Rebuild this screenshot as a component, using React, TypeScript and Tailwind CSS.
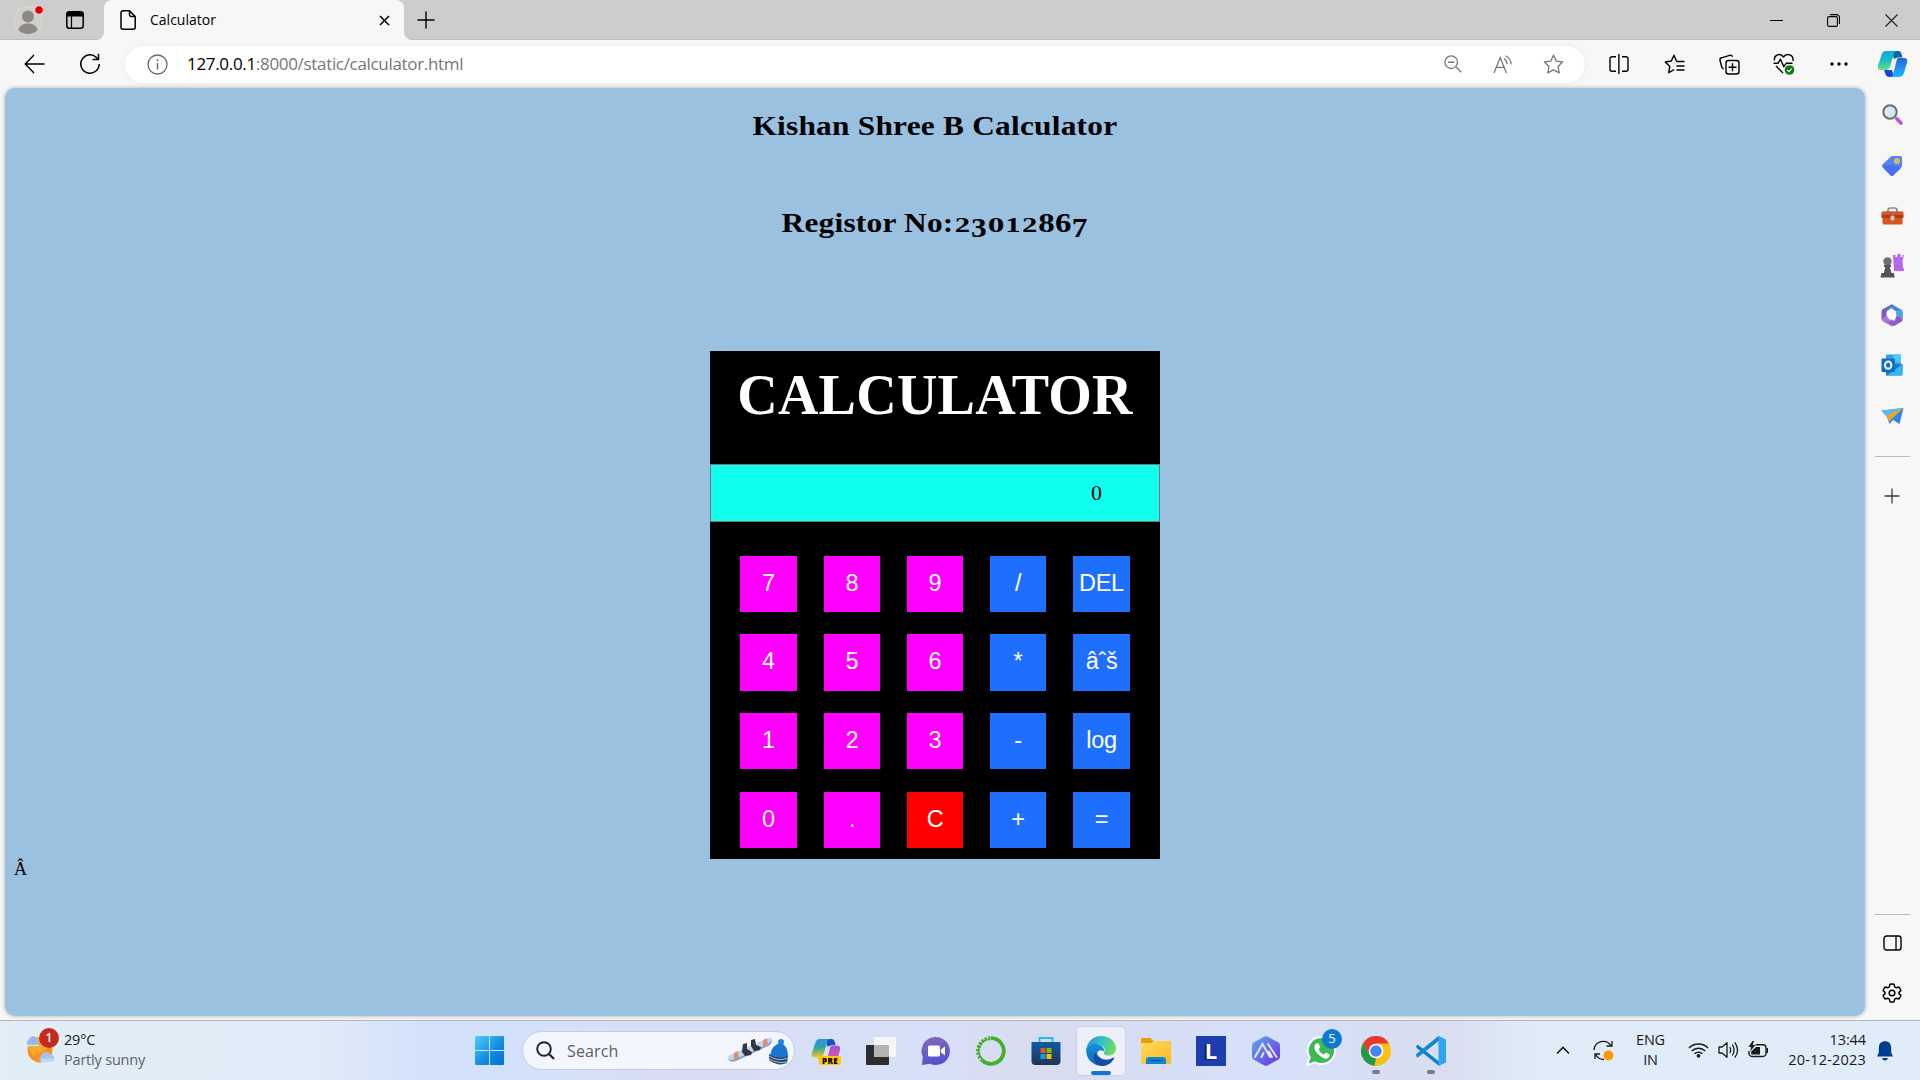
import React from "react";

type SvgProps = { w: number; h: number; vb?: string; className?: string; children: React.ReactNode };

function Svg({ w, h, vb, className = "", children }: SvgProps) {
  return (
    <svg width={w} height={h} viewBox={vb ?? `0 0 ${w} ${h}`} fill="none" className={`shrink-0 ${className}`}>
      {children}
    </svg>
  );
}

const ink = "#1b1b1b";

function TitleBar() {
  return (
    <div className="flex h-10 items-center bg-[#cdcdcd] shadow-[inset_0_-1px_0_#bdbdbd]">
      <Svg w={30} h={30} className="ml-[13px]">
        <circle cx="15" cy="15.5" r="13.7" fill="#d0cfcb" stroke="#dedcd6" />
        <circle cx="15" cy="11.5" r="6" fill="#8d8a86" />
        <path d="M5.2 25c1.500-4.600 5.400-6.400 9.800-6.400s8.300 1.800 9.800 6.400a13.700 13.700 0 0 1-19.600 0z" fill="#8d8a86" />
        <circle cx="26" cy="5" r="4.300" fill="#e60000" stroke="#e8e8e8" />
      </Svg>
      <Svg w={18} h={18} className="ml-[23px]">
        <rect x="0.800" y="0.800" width="16.400" height="16.400" rx="2.500" stroke="#000" strokeWidth="1.500" />
        <path d="M1 3a2 2 0 0 1 2-2h12a2 2 0 0 1 2 2v2.500H1z" fill="#000" />
        <path d="M5.500 5v12" stroke="#000" strokeWidth="1.200" />
      </Svg>
      <div className="flex h-10 w-2 items-end self-end ml-[12px]">
        <Svg w={8} h={8}><path d="M0 8a8 8 0 0 0 8-8v8z" fill="#f7f7f7" /></Svg>
      </div>
      <div className="flex h-10 w-[300px] items-center rounded-t-lg bg-[#f7f7f7]">
        <Svg w={16} h={20} className="ml-[16px]">
          <path d="M3 .8h6.500l5.700 5.700v10.700a2 2 0 0 1-2 2H3a2 2 0 0 1-2-2V2.800a2 2 0 0 1 2-2zM9.500 1v3.500a2 2 0 0 0 2 2H15" stroke="#000" strokeWidth="1.500" />
        </Svg>
        <span className="ml-[14px] pb-px text-[14px] tracking-[0px] text-black">Calculator</span>
        <Svg w={11} h={11} className="ml-auto mr-[14px]"><path d="M1 1l9 9M10 1l-9 9" stroke="#000" strokeWidth="1.500" /></Svg>
      </div>
      <div className="flex h-10 w-2 items-end">
        <Svg w={8} h={8}><path d="M8 8a8 8 0 0 1-8-8v8z" fill="#f7f7f7" /></Svg>
      </div>
      <Svg w={18} h={18} className="ml-[4.500px]"><path d="M9 .5v17M.5 9h17" stroke="#000" strokeWidth="1.400" /></Svg>
      <div className="ml-auto flex items-center">
        <Svg w={13} h={13} className="mr-[44px]"><path d="M0 6.500h13" stroke="#000" /></Svg>
        <Svg w={13} h={13} className="mr-[45px]">
          <rect x=".6" y="2.600" width="9.800" height="9.800" rx="1.500" stroke="#000" strokeWidth="1.100" />
          <path d="M3 .6h6.500a3 3 0 0 1 3 3V10" stroke="#000" strokeWidth="1.100" />
        </Svg>
        <Svg w={13} h={13} className="mr-[22px]"><path d="M.5.5l12 12M12.500.5l-12 12" stroke="#222" strokeWidth="1.200" /></Svg>
      </div>
    </div>
  );
}

function CopilotMark({ pre = false }: { pre?: boolean }) {
  return (
    <Svg w={pre ? 30 : 31} h={pre ? 29 : 28} vb={pre ? "0 0 31 30" : "0 0 31 28"}>
      <defs>
        <linearGradient id={pre ? "cpa" : "cna"} x1="0" y1="0" x2=".1" y2="1">
          <stop offset="0" stopColor={pre ? "#2d8fe6" : "#12a8e0"} />
          <stop offset=".5" stopColor={pre ? "#2aa6a8" : "#1bb8c8"} />
          <stop offset="1" stopColor={pre ? "#f2c51c" : "#5fe08a"} />
        </linearGradient>
        <linearGradient id={pre ? "cpb" : "cnb"} x1="0" y1="0" x2="0" y2="1">
          <stop offset="0" stopColor={pre ? "#a84be0" : "#2c64dc"} />
          <stop offset="1" stopColor={pre ? "#f5607a" : "#18b8ff"} />
        </linearGradient>
      </defs>
      <path d="M14 1h7c2 0 3 1 3.500 3l1 3.500h-5L17 9z" fill={pre ? "#1b4fc4" : "#0d6a9c"} />
      <path d="M7 20h8l2 7h-4c-3 0-4-1-4.600-3z" fill={pre ? "#f2a51c" : "#1746cf"} />
      <path d="M9 1h11c-1.800 0-2.600 1-3.200 3l-3.700 12.500c-.8 2.500-2 3.500-4.200 3.500H4c-3 0-3.600-2-3-4.500L4.500 5C5.300 2.400 6.500 1 9 1z" fill={`url(#${pre ? "cpa" : "cna"})`} />
      <path d="M21.500 8H27c3 0 3.700 2 3 4.500L27 23c-.8 2.700-2.500 4-5 4h-9c1.700 0 2.700-1 3.200-3l3.200-12.500C20 9 20 8 21.500 8z" fill={`url(#${pre ? "cpb" : "cnb"})`} />
    </Svg>
  );
}

function Slot({ w = "w-[55px]", children }: { w?: string; children: React.ReactNode }) {
  return <div className={`relative flex h-full shrink-0 items-center justify-center ${w}`}>{children}</div>;
}

function Toolbar() {
  return (
    <div className="flex h-12 items-center bg-[#f7f7f7]">
      <Svg w={21} h={20} className="ml-[24px]"><path d="M20.500 10H1.500M10 1L1.200 10l8.800 9" stroke="#000" strokeWidth="1.400" /></Svg>
      <Svg w={22} h={22} className="ml-[34px]">
        <path d="M20.200 11a9.200 9.200 0 1 1-3-6.800l2 2" stroke="#000" strokeWidth="1.500" />
        <path d="M19.500.8v5.700h-6" stroke="#000" strokeWidth="1.500" />
      </Svg>
      <div className="ml-[24px] flex h-[37px] w-[1460px] items-center rounded-full bg-white shadow-[0_0_4px_rgba(0,0,0,0.07)]">
        <Svg w={21} h={21} className="ml-[22px]">
          <circle cx="10.500" cy="10.500" r="9.500" stroke="#6b6b6b" strokeWidth="1.300" />
          <path d="M10.500 9v6.500" stroke="#6b6b6b" strokeWidth="1.400" />
          <circle cx="10.500" cy="6.300" r="1" fill="#6b6b6b" />
        </Svg>
        <span className="ml-[19px] whitespace-nowrap text-[17px] tracking-[-0.320px] text-[#767676]">
          <span className="text-black">127.0.0.1</span>:8000/static/calculator.html
        </span>
        <div className="ml-auto mr-[7px] flex h-full">
          <Slot w="w-[50px]">
            <Svg w={18} h={18}><circle cx="7.200" cy="7.200" r="6.300" stroke="#777" strokeWidth="1.300" /><path d="M12 12l5.300 5.300M4.200 7.200h6" stroke="#777" strokeWidth="1.400" /></Svg>
          </Slot>
          <Slot w="w-[50px]">
            <Svg w={20} h={19}>
              <path d="M1 18L7.200 2.500 13.400 18M3.300 12.300h7.800" stroke="#777" strokeWidth="1.300" />
              <path d="M11 3.500c2 1.300 2.900 3 3 5.500M12.500.8c3.500 1.800 5.500 4.700 5.700 8.700" stroke="#777" strokeWidth="1.200" />
            </Svg>
          </Slot>
          <Slot w="w-[50px]">
            <Svg w={21} h={20}><path d="M10.500 1.200l2.800 5.900 6.300.9-4.600 4.500 1.200 6.400-5.700-3-5.700 3L6 12.500 1.400 8l6.300-.9z" stroke="#777" strokeWidth="1.300" strokeLinejoin="round" /></Svg>
          </Slot>
        </div>
      </div>
      <div className="ml-[6.500px] flex h-full">
        <Slot>
          <Svg w={20} h={20}><path d="M7 2.700H3a2 2 0 0 0-2 2v10.600a2 2 0 0 0 2 2h4M13 2.700h4a2 2 0 0 1 2 2v10.600a2 2 0 0 1-2 2h-4" stroke="#000" strokeWidth="1.400" /><path d="M9.900 0v20" stroke="#000" strokeWidth="1.400" /></Svg>
        </Slot>
        <Slot>
          <Svg w={21} h={20}><path d="M12.500 7.300L10 1.300 7.300 7l-6 1 4.500 4.400-1 6.300 5.500-3.200M12.500 7.500h8M12.500 12h8M12.500 16h8" stroke="#000" strokeWidth="1.400" strokeLinejoin="round" /></Svg>
        </Slot>
        <Slot>
          <Svg w={21} h={21}>
            <path d="M4.800 14.800c-1 0-1.800-.6-2-1.600L1 6.300c-.3-1.200.3-2.200 1.500-2.500L10.700 1.300c1.300-.4 2.300.2 2.600 1.500" stroke="#000" strokeWidth="1.400" />
            <rect x="7" y="6.500" width="13" height="13.500" rx="2.500" stroke="#000" strokeWidth="1.400" />
            <path d="M13.500 9.300v8M9.500 13.300h8" stroke="#000" strokeWidth="1.400" />
          </Svg>
        </Slot>
        <Slot>
          <Svg w={22} h={22}>
            <path d="M1.500 7.500C.5 1.500 7.500-.5 10.500 4 13.500-.5 21 1.500 20 8M3 13l7 7M.5 10.200h4.700l2.300-4 3.300 7.500 2.600-3.500h6.100" stroke="#000" strokeWidth="1.400" strokeLinejoin="round" />
            <circle cx="16.500" cy="17" r="4.800" fill="#107c10" /><path d="M14.300 17l1.600 1.600 2.800-3" stroke="#fff" strokeWidth="1.100" />
          </Svg>
        </Slot>
        <Slot><Svg w={18} h={4}><circle cx="2" cy="2" r="1.700" fill="#000" /><circle cx="9" cy="2" r="1.700" fill="#000" /><circle cx="16" cy="2" r="1.700" fill="#000" /></Svg></Slot>
        <Slot w="w-[52px]"><CopilotMark /></Slot>
      </div>
    </div>
  );
}

const digit = "bg-[#ff00ff] h-[56px]";
const digitTall = "bg-[#ff00ff] h-[57px]";
const op = "bg-[#1f6fff] h-[56px]";
const opTall = "bg-[#1f6fff] h-[57px]";

const keys: [string, string][] = [
  ["7", digit], ["8", digit], ["9", digit], ["/", op], ["DEL", op],
  ["4", digitTall], ["5", digitTall], ["6", digitTall], ["*", opTall], ["âˆš", opTall],
  ["1", digit], ["2", digit], ["3", digit], ["-", op], ["log", op],
  ["0", digit], [".", digit], ["C", "bg-[#ff0000] h-[56px]"], ["+", op], ["=", op],
];

/* Old-style figures: 0-2 sit at x-height, 3 and 7 descend, 6 and 8 ascend. */
const figureStyle: Record<string, string> = {
  "0": "text-[22px] scale-x-[1.350]",
  "1": "text-[22px] scale-x-[1.250]",
  "2": "text-[22px] scale-x-[1.250]",
  "3": "text-[28px] align-[-5px]",
  "7": "text-[28px] align-[-5px]",
  "6": "text-[28px] scale-x-[1.050]",
  "8": "text-[28px] scale-x-[1.050]",
};

function Page() {
  return (
    <div className="ml-[5px] flex h-[928px] w-[1860px] flex-col items-center rounded-[10px] bg-[#9bc1e1] shadow-[0_0_4px_rgba(0,0,0,0.3)]">
      <h2 className="mt-[20px] h-9 scale-x-[1.120] whitespace-nowrap font-['Liberation_Serif'] text-[28px] font-bold leading-9 tracking-[0.200px] text-black">
        Kishan Shree B Calculator
      </h2>
      <h2 className="mt-[61px] flex h-9 scale-x-[1.120] items-baseline whitespace-nowrap font-['Liberation_Serif'] text-[28px] font-bold leading-9 text-black">
        <span className="tracking-[0.200px]">Registor No:</span>
        <span>
          {"23012867".split("").map((d, i) => (
            <span key={i} className={`inline-block w-[15px] text-center leading-none ${figureStyle[d]}`}>{d}</span>
          ))}
        </span>
      </h2>
      <div className="mt-[110px] flex h-[508px] w-[450px] flex-col items-center bg-black">
        <h1 className="mt-[12px] h-[64px] whitespace-nowrap font-['Liberation_Serif'] text-[56px] font-bold leading-[64px] tracking-[0.250px] text-white">CALCULATOR</h1>
        <div className="mt-[37px] flex h-[58px] w-[450px] items-center justify-end border border-[#767676] bg-[#11ffee] pb-[2px] pr-[57px] font-['Liberation_Serif'] text-[22px] text-black">0</div>
        <div className="mt-[34px] grid grid-cols-[57px_56px_56px_56px_57px] grid-rows-[56px_57px_57px_56px] items-start gap-x-[27px] gap-y-[22px]">
          {keys.map(([label, style]) => (
            <button key={label} className={`flex items-center justify-center pb-px font-['Liberation_Sans'] text-[23.500px] leading-none tracking-[-0.300px] text-white ${style}`}>
              {label}
            </button>
          ))}
        </div>
      </div>
      <p className="mt-[-1px] self-start pl-[9px] font-['Liberation_Serif'] text-[18px] leading-[22px] text-black">Â</p>
    </div>
  );
}

function Sidebar() {
  return (
    <div className="flex h-[932px] w-[55px] flex-col items-center pr-[1px]">
      <Svg w={21} h={21} className="mt-[16px]">
        <circle cx="8" cy="8" r="6.700" fill="#cfe8fa" stroke="#6b6b6b" strokeWidth="2" />
        <path d="M12.800 12.800l1.500 1.500" stroke="#888" strokeWidth="2" />
        <path d="M15 15l4 4" stroke="#b94df0" strokeWidth="3.600" strokeLinecap="round" />
      </Svg>
      <Svg w={22} h={22} className="mt-[30px]">
        <path d="M1.500 9.500L9.800 1.800Q10.500 1 11.500 1H19q2 0 2 2v7.500q0 1-.7 1.800l-7.800 8q-1.500 1.300-3 0l-8-8q-1.300-1.400 0-2.800z" fill="#5583f6" />
        <path d="M1 11l10-1 9 3-8 7.500q-1 1-2.500 0z" fill="#4a6ef0" />
        <circle cx="16" cy="6" r="2.300" fill="#9db8f0" stroke="#f4c21a" strokeWidth="1.500" />
      </Svg>
      <Svg w={23} h={18} className="mt-[30px]">
        <path d="M7 6V3.500Q7 1 9.500 1h4Q16 1 16 3.500V6" stroke="#8b8b8b" strokeWidth="1.700" />
        <rect x="1.500" y="8" width="20" height="9.500" rx="1.500" fill="#d9541e" />
        <path d="M2 4.500h19q1.500 0 1.500 1.500v5H.5V6Q.5 4.500 2 4.500z" fill="#b83a12" />
        <path d="M1 5.500h21v2H1z" fill="#e2632a" /><rect x="9.500" y="8.500" width="4" height="5" rx="1.500" fill="#c9c9c9" />
      </Svg>
      <Svg w={24} h={24} className="mt-[29px]">
        <path d="M13 1h2.500v2h2V0h3v3h2V1H24l-1.500 6 .7 7.500h1v2.500H14z" fill="#b866f2" />
        <circle cx="7.500" cy="7.500" r="4.200" fill="#707070" />
        <path d="M4 11h7v2H9.800l1.700 6h2.300l1 4.500H.5l1-4.500h2.300L5.300 13H4z" fill="#555" />
      </Svg>
      <Svg w={22} h={23} className="mt-[26px]">
        <path d="M11 .5l9 5q1.500 1 1.500 2.500v3l-6-3.500L10 4 5 8V5q0-1 1-1.500z" fill="#3c86df" />
        <path d="M10 .8Q11 .3 12 .8L5.500 5v9.500l-5 1V8Q.5 6 2 5z" fill="#7a5cc0" />
        <path d="M.6 14.500L6 12l9.500 6.500L12 22q-1 .6-2 .1l-8-4.600Q.5 16.500.6 14.500z" fill="#a678d8" />
        <path d="M21.500 8v8q0 1-1 1.700L13 22l-7-4 8-1.500 1.500-8.500z" fill="#8a5cc4" /><path d="M20 5l1.500 3v7L15 11V8z" fill="#49a6f0" />
        <path d="M8.500 8h5l2.300 3.700-2.500 3.800h-5L6 11.700z" fill="#fff" />
      </Svg>
      <Svg w={22} h={22} className="mt-[27px]">
        <rect x="5" y=".5" width="15" height="16" rx="1" fill="#2aa4ea" /><path d="M12.500 .5H20v8h-7.500z" fill="#52c6f6" />
        <path d="M5 11l16.500-1V20q0 1.500-1.500 1.500H5z" fill="#1478d0" /><path d="M6 21.500L21.500 10V20q0 1.500-1.500 1.500z" fill="#38b6f2" />
        <rect x=".5" y="4.500" width="13.500" height="13.500" rx="1.200" fill="#0f6cc8" />
        <ellipse cx="7.200" cy="11.200" rx="3.200" ry="3.600" stroke="#fff" strokeWidth="2" />
      </Svg>
      <Svg w={23} h={18} className="mt-[30.500px]">
        <path d="M.5 3.500L22.500 1l-4 16-6.500-4-3.500 4-2.500-7z" fill="#3485ea" />
        <path d="M.5 3.500L22.500 1 6 10z" fill="#54bdf2" /><path d="M5 8.500L22.500 1 8 14.500z" fill="#f2a31f" />
      </Svg>
      <div className="mt-[31.500px] h-px w-[35px] bg-[#b9b9b9]" />
      <Svg w={16} h={16} className="mt-[31px]"><path d="M8 .5v15M.5 8h15" stroke="#3a3a3a" strokeWidth="1.300" /></Svg>
      <div className="mt-auto h-px w-[35px] bg-[#b9b9b9]" />
      <Svg w={19} h={16} className="mt-[20px]"><rect x="1" y="1" width="17" height="14" rx="2.500" stroke="#000" strokeWidth="1.400" /><path d="M13 1v14" stroke="#000" strokeWidth="1.300" /></Svg>
      <Svg w={22} h={22} vb="0 0 24 24" className="mb-[16.500px] mt-[31px]">
        <path d="M9.700 2.500q2.300-.6 4.600 0l.6 2.800 1.800 1 2.700-.9q1.600 1.700 2.300 4l-2.100 1.900v1.400l2.100 1.900q-.7 2.300-2.300 4l-2.700-.9-1.800 1-.6 2.800q-2.300.6-4.600 0l-.6-2.800-1.800-1-2.700.9q-1.600-1.700-2.300-4l2.100-1.900v-1.400L2.300 9.400q.7-2.300 2.300-4l2.700.9 1.800-1z" stroke="#000" strokeWidth="1.600" strokeLinejoin="round" />
        <circle cx="12" cy="12" r="3.100" stroke="#000" strokeWidth="1.600" />
      </Svg>
    </div>
  );
}

function TaskbarApps() {
  return (
    <div className="ml-[3.500px] flex h-full">
      <Slot>
        <div className="flex flex-col items-center pt-0.5"><CopilotMark pre />
          <span className="ml-2 mt-[-11px] flex h-[9px] items-center rounded-[2px] bg-[#ffc800] px-[3px] font-['Open_Sans'] text-[8px] font-extrabold leading-none tracking-[0.400px] text-black">PRE</span>
        </div>
      </Slot>
      <Slot>
        <Svg w={30} h={28}><rect x="0" y="8" width="23" height="20" rx="1" fill="#2d2d2d" /><rect x="8" y="0" width="22" height="20" rx="1" fill="#f6f6f6" /><path d="M8 8h15v12H8z" fill="#b3b3b3" /></Svg>
      </Slot>
      <Slot>
        <Svg w={30} h={28}>
          <defs><linearGradient id="chat" x1="0" y1="0" x2=".3" y2="1"><stop stopColor="#8a6bb8" /><stop offset="1" stopColor="#5254cf" /></linearGradient></defs>
          <path d="M15 0a14 14 0 1 1-6 26.700L1 28l.8-8A14 14 0 0 1 15 0z" fill="url(#chat)" /><rect x="7" y="8.500" width="12" height="11" rx="1.500" fill="#fff" /><path d="M20 12.500l4-3v9l-4-3z" fill="#fff" />
        </Svg>
      </Slot>
      <Slot>
        <Svg w={30} h={30}><path d="M15 2.200a12.800 12.800 0 1 1-8.500 22.400" stroke="#43b02a" strokeWidth="3.800" /><path d="M6.500 24.600A12.800 12.800 0 0 1 15 2.200" stroke="#43b02a" strokeWidth="4" strokeDasharray="2.200 1.300" /><path d="M7.500 24A11.500 11.500 0 0 1 14 3" stroke="#43b02a" strokeWidth="1.200" /></Svg>
      </Slot>
      <Slot>
        <Svg w={30} h={30}>
          <defs><linearGradient id="store" x1="0" y1="0" x2="0" y2="1"><stop stopColor="#0d5ca8" /><stop offset="1" stopColor="#243350" /></linearGradient></defs>
          <path d="M8.500 6V2h13v4" stroke="#2bb7f4" strokeWidth="1.800" /><path d="M.5 6h29v19a4 4 0 0 1-4 4h-21a4 4 0 0 1-4-4z" fill="url(#store)" />
          <path d="M9.500 12h5v5h-5z" fill="#f25022" /><path d="M15.500 12h5v5h-5z" fill="#7fba00" /><path d="M9.500 18h5v5h-5z" fill="#00a4ef" /><path d="M15.500 18h5v5h-5z" fill="#ffb900" />
        </Svg>
      </Slot>
      <Slot>
        <div className="flex h-12 w-12 flex-col items-center rounded-[4px] bg-[#edf0f9] pt-[9px] shadow-[0_0_1px_1px_rgba(0,0,0,0.06)]">
          <Svg w={30} h={30}>
            <defs>
              <linearGradient id="eg1" x1="0" y1=".2" x2="1" y2=".5"><stop stopColor="#2492d8" /><stop offset=".5" stopColor="#38bfc8" /><stop offset="1" stopColor="#6ce05a" /></linearGradient>
              <linearGradient id="eg2" x1="0" y1="0" x2="0" y2="1"><stop stopColor="#178fd8" /><stop offset="1" stopColor="#1067c0" /></linearGradient>
            </defs>
            <path d="M.5 12C2.500 4 8.500 0 15 0c9 0 15 6 15 12.500 0 4.500-3.500 7-7.500 7-4 0-5.500-1.800-4.500-3 1.800-2.500.5-6.500-5-8C8 7.500 3 9 .5 12z" fill="url(#eg1)" />
            <path d="M.3 12.500C3 8.500 8 6.500 13 8.500c4.500 1.800 5.500 5 4.800 7-3-3-7.300-.5-7.300 4 0 5.500 5 10 10 9.500C10 32-1 25 .3 12.500z" fill="url(#eg2)" />
            <path d="M11 16c-1.500 5 2.500 10.500 9 11 3.500 0 6-1.500 7-3-2.500 4-7 6-11.500 6C8.500 29 5.500 22 9.500 17z" fill="#12509c" /><path d="M11.500 18c2 5.500 9 7.500 15.700 3.700.8-.4 1.300.3.800 1-2.500 4-6.500 6-10.500 5.500-5-.8-7.500-6-6-10.200z" fill="#14509e" />
          </Svg>
          <div className="mt-[5px] h-1 w-5 rounded-full bg-[#0a78d4]" />
        </div>
      </Slot>
      <Slot>
        <Svg w={30} h={28}><defs><linearGradient id="folder" x1="0" y1="0" x2="1" y2="1"><stop stopColor="#ffdc62" /><stop offset="1" stopColor="#f9b91c" /></linearGradient></defs>
          <path d="M0 2q0-1 1-1h8.500l3 3H30v8H0z" fill="#e3a008" /><path d="M0 6h10l3-2h17v22q0 1-1 1H1q-1 0-1-1z" fill="url(#folder)" /><path d="M5 27v-4q0-3 3-3h14q3 0 3 3v4z" fill="#1383d8" /><path d="M9 23.500h12" stroke="#0a549c" strokeWidth="1.200" /></Svg>
      </Slot>
      <Slot>
        <div className="flex h-[30px] w-[30px] items-center justify-center bg-[#1e3db0] pb-[2px] font-['Open_Sans'] text-[22px] font-bold leading-none text-white [text-shadow:-2px_1px_0_#12246e]">L</div>
      </Slot>
      <Slot>
        <Svg w={28} h={30}><defs><linearGradient id="hex" x1="0" y1="0" x2="1" y2="1"><stop stopColor="#5cabea" /><stop offset="1" stopColor="#702de8" /></linearGradient></defs>
          <path d="M12 .8q2-1 4 0l10 5.500q2 1.200 2 3.200v11q0 2-2 3.200l-10 5.500q-2 1-4 0L2 23.700Q0 22.500 0 20.500v-11Q0 7.500 2 6.300z" fill="url(#hex)" />
          <path d="M3 21l7.500-13L18 21M9.500 21l2-4M17 15.500l3 5.500M16 8l8.500 13" stroke="#e7e7ff" strokeWidth="1.900" strokeLinecap="round" /></Svg>
      </Slot>
      <Slot>
        <Svg w={30} h={30}><path d="M15.500 1a13.500 13.500 0 1 1-6.300 25.400L1 29l2.700-7.500A13.500 13.500 0 0 1 15.500 1z" fill="#3db954" stroke="#fff" strokeWidth="2" /><path d="M10 7.500l2.500-.2 1.800 4-1.700 2.200q1.700 3.500 5.200 5l2.200-2 3.700 2q0 3-2.800 4-3 .8-8-3.500-5-4.500-4.500-8 .3-2.200 1.600-3.500z" fill="#fff" /></Svg>
        <span className="absolute left-[28.500px] top-[8px] flex h-5 w-5 items-center justify-center rounded-full bg-[#0f78d1] text-[13px] text-white">5</span>
      </Slot>
      <Slot>
        <Svg w={30} h={30}><circle cx="15" cy="15" r="15" fill="#fbc116" /><path d="M2 7.500A15 15 0 0 1 28 7.500H15L8.500 18.700z" fill="#e33b2e" /><path d="M2 7.500l6.500 11.200L15 22.500l-.5 7.500A15 15 0 0 1 2 7.500z" fill="#229a4c" /><path d="M15 22.500h6.500L15 30q-1 .2-1.500-.1z" fill="#fbc116" /><circle cx="15" cy="15" r="7.300" fill="#fff" /><circle cx="15" cy="15" r="5.800" fill="#4285f4" /></Svg>
        <span className="absolute bottom-[6px] left-[23px] h-1 w-2 rounded-full bg-[#777b85]" />
      </Slot>
      <Slot>
        <Svg w={30} h={30}><path d="M1.500 8.500L23 25.500V30L.7 12q-1-1.300 0-2.500z" fill="#0c80c8" /><path d="M1.500 21.500L23 4.500V0L.7 18q-1 1.300 0 2.500z" fill="#0a6cb4" /><path d="M1.500 21.500l21-17V0L6 13.500.7 18q-1 1.300.8 3.500z" fill="#0d8bd6" /><path d="M22.500 0L30 3.500v23L22.500 30z" fill="#2aa6f2" /></Svg>
        <span className="absolute bottom-[6px] left-[23px] h-1 w-2 rounded-full bg-[#777b85]" />
      </Slot>
    </div>
  );
}

function Taskbar() {
  return (
    <div className="flex h-[60px] w-[1920px] items-center border-t border-[#b2b7c2] bg-[linear-gradient(90deg,#e1edf7_0px,#e2ecf8_300px,#d2e0fb_440px,#d3e2fa_520px,#d8def3_650px,#d7e0f8_930px,#d8dcef_1040px,#d5e0f9_1270px,#d9def0_1440px,#e0ebf8_1530px,#e0edf8_1920px)]">
      <div className="relative ml-[25px] mb-[3px] h-[30px] w-[30px]">
        <Svg w={30} h={30}>
          <circle cx="15" cy="16" r="12.500" fill="#f59324" /><path d="M3 12a12.500 12.500 0 0 1 24 0L8 22z" fill="#f7ab2d" />
          <path d="M3.500 12a3.500 3.500 0 0 1 0-6 5 5 0 0 1 9-1.500L14 12z" fill="#9bb8ec" /><path d="M2 10.800h12V12H2z" fill="#d6e3f8" />
          <path d="M16 28a3.500 3.500 0 0 1 0-6 5.200 5.200 0 0 1 9.500-1.500 4 4 0 0 1 1.500 7.500z" fill="#a6c1ef" /><path d="M16 24.500h12V28H16z" fill="#c4d7f6" />
        </Svg>
        <span className="absolute left-[14px] top-[-6px] flex h-5 w-5 items-center justify-center rounded-full bg-[#c42b1c] text-[12px] font-semibold text-white">1</span>
      </div>
      <div className="mb-[2px] ml-[9px] flex w-[90px] flex-col whitespace-nowrap text-[14.500px] leading-5">
        <span className="tracking-[-0.200px] text-[#1a1a1a]">29°C</span>
        <span className="tracking-[-0.200px] text-[#5c6269]">Partly sunny</span>
      </div>
      <Svg w={29} h={29} className="ml-[321px]">
        <defs><linearGradient id="win" x1="0" y1="0" x2="1" y2="1"><stop stopColor="#4ccdfc" /><stop offset=".6" stopColor="#0f8ade" /><stop offset="1" stopColor="#0072cf" /></linearGradient></defs>
        <path d="M1 0h13v14H0V1q0-1 1-1zM15 0h13q1 0 1 1v13H15zM0 15h14v14H1q-1 0-1-1zM15 15h14v13q0 1-1 1H15z" fill="url(#win)" />
      </Svg>
      <div className="ml-[18px] flex h-[39px] w-[273px] items-center rounded-full border border-[#c3cce0] bg-[#f3f6fd]">
        <Svg w={19} h={19} className="ml-[13px]"><circle cx="8" cy="8" r="6.800" stroke="#222" strokeWidth="1.900" /><path d="M12.800 12.800l5.200 5.200" stroke="#222" strokeWidth="2.200" /></Svg>
        <span className="ml-[12px] text-[16px] tracking-[0.150px] text-[#5b5e64]">Search</span>
        <Svg w={62} h={30} className="ml-auto mr-[5px]">
          <path d="M3 19L41 2q4-1 4 2t-4 5L9 24q-6 2-8-1 0-3 2-4z" fill="#bdd5f3" /><path d="M1 23q3 2 8 0l32-15 4-4q0 4-4 6L9 25q-6 2-8-2z" fill="#7aa2dc" />
          <path d="M7 17l4-2 1 7-5 2zM36 4l4-1.500 1 6-5 2z" fill="#ea8c63" />
          <path d="M16 8l4-1v6l5 3-1 3-6 1-3-4zM24 4l4-1 1 6 5 2-1 3-6 1-3-5z" fill="#33363d" />
          <circle cx="54" cy="6" r="3" fill="#1e88e8" /><path d="M43 20q2-12 11-13 7 3 7 13l-1 5q-8 4-17 0z" fill="#1977d2" /><path d="M42 18q9 6 19 2l-1 7q-9 4-18-3z" fill="#174f9c" /><path d="M42 20q9 6 19 2M42 23q9 5 18 3" stroke="#d5b26a" strokeWidth="1" />
        </Svg>
      </div>
      <TaskbarApps />
      <Svg w={14} h={9} className="ml-[97px]"><path d="M1 7.500l6-6 6 6" stroke={ink} strokeWidth="1.700" /></Svg>
      <Svg w={21} h={21} className="mb-px ml-[23px]">
        <path d="M1 10A9.300 9.300 0 0 1 18 5.500M19 1v5h-5.500M2 19v-5h5M2.500 14.500q3 5 8.500 5" stroke={ink} strokeWidth="1.300" /><circle cx="15.500" cy="15.500" r="5" fill="#ff9800" />
      </Svg>
      <div className="mb-px ml-[17px] flex w-[40px] flex-col items-center text-[14.500px] leading-5 tracking-[-0.200px] text-[#1a1a1a]"><span>ENG</span><span>IN</span></div>
      <Svg w={21} h={16} className="mb-[2px] ml-[17px]">
        <path d="M1 6a13.500 13.500 0 0 1 19 0M3.800 9a9.500 9.500 0 0 1 13.400 0M6.500 11.800a5.700 5.700 0 0 1 8 0" stroke={ink} strokeWidth="1.500" /><circle cx="10.500" cy="13.800" r="1.900" fill={ink} />
      </Svg>
      <Svg w={21} h={18} className="mb-px ml-[9.500px]"><path d="M1 6h3l5-4.300v14.600L4 12H1z" stroke={ink} strokeWidth="1.300" strokeLinejoin="round" /><path d="M11.800 6q1.700 3 0 6M14.300 3.500q3.500 5.500 0 11M16.800 1.300q5.500 7.700 0 15.400" stroke={ink} strokeWidth="1.300" /></Svg>
      <Svg w={21} h={17} className="mb-[3px] ml-[9px]">
        <path d="M7.500 3.700H15a3 3 0 0 1 3 3v5.800a3 3 0 0 1-3 3H4a3 3 0 0 1-3-3V10" stroke={ink} strokeWidth="1.400" /><path d="M3.200 10.500L8 6h4v7.500H3.200z" fill={ink} /><path d="M18.500 7h1.500v5h-1.500z" fill={ink} /><path d="M4.500 0L.5 6h2.700L2 10.500 7.500 4H4.700L6 0z" fill={ink} />
      </Svg>
      <div className="mb-[2px] ml-auto flex flex-col items-end text-[14.500px] leading-5 text-[#1a1a1a]"><span className="tracking-[-0.100px]">13:44</span><span className="tracking-[0.200px]">20-12-2023</span></div>
      <Svg w={16} h={20} className="ml-[11px] mr-[27px]"><path d="M8 0q6.200.5 6.200 7v4.500L16 15.500H0l1.800-4V7Q1.800.5 8 0z" fill="#003e92" /><path d="M5 17h6q-.7 2.500-3 2.500T5 17z" fill="#003e92" /></Svg>
    </div>
  );
}

export default function App() {
  return (
    <div className="flex h-[1080px] w-[1920px] flex-col overflow-hidden bg-[#f7f7f7] font-['Open_Sans',sans-serif]">
      <TitleBar />
      <Toolbar />
      <div className="flex h-[932px]">
        <Page />
        <Sidebar />
      </div>
      <Taskbar />
    </div>
  );
}
